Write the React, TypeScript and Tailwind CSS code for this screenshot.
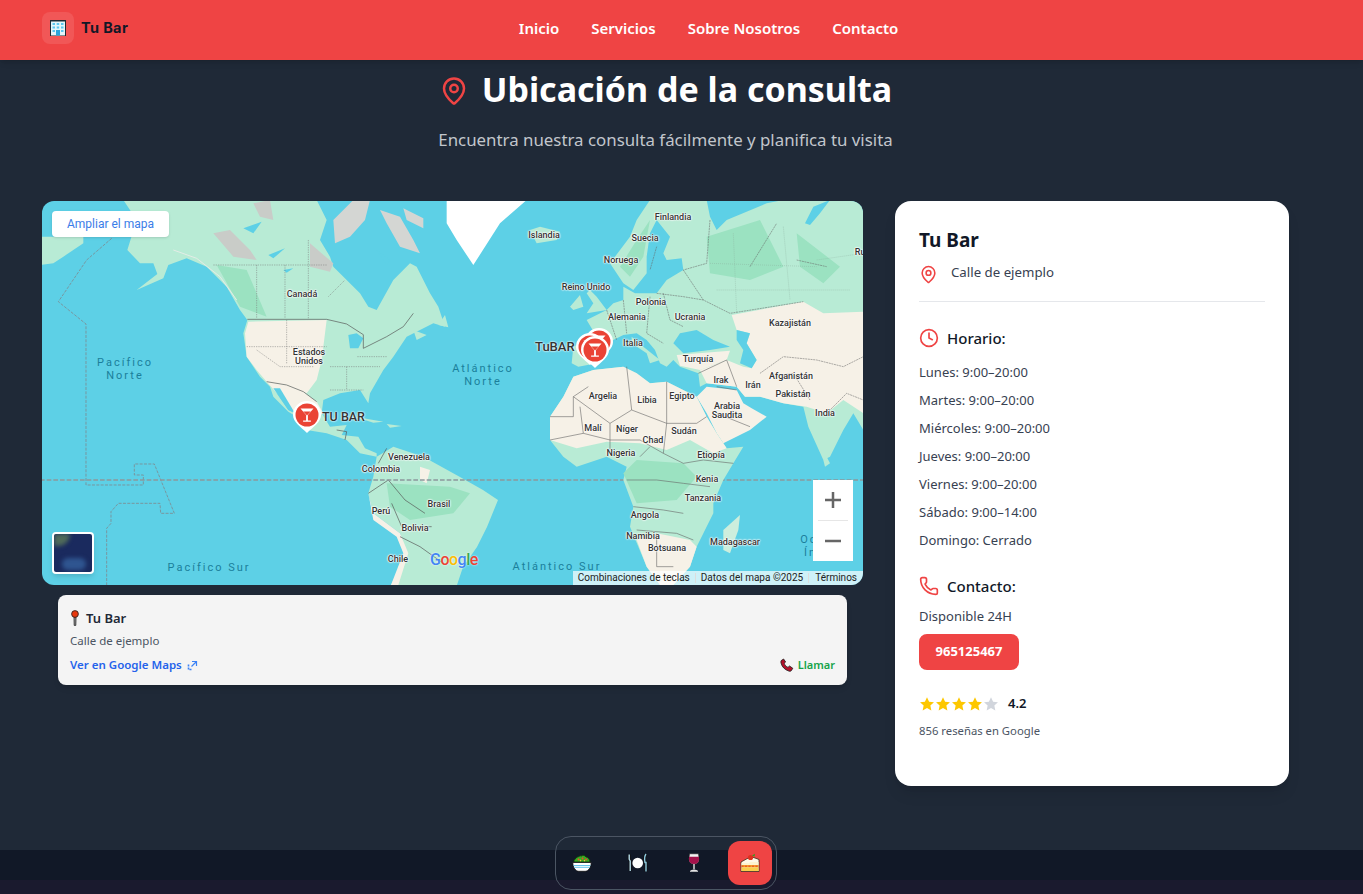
import { Clock, MapPin, Phone } from "lucide-react";

const waterLabels = [
  { t: "Pacífico", x: 125, y: 362 },
  { t: "Norte", x: 125, y: 375 },
  { t: "Atlántico", x: 483, y: 368 },
  { t: "Norte", x: 483, y: 381 },
  { t: "Pacífico Sur", x: 209, y: 567 },
  { t: "Atlántico Sur", x: 557, y: 566 },
  { t: "Océano", x: 825, y: 539 },
  { t: "Índico", x: 825, y: 552 },
];

const countryLabels = [
  { t: "Canadá", x: 302, y: 294 },
  { t: "Estados", x: 309, y: 352 },
  { t: "Unidos", x: 309, y: 361 },
  { t: "Venezuela", x: 409, y: 457 },
  { t: "Colombia", x: 381, y: 469 },
  { t: "Perú", x: 381, y: 511 },
  { t: "Brasil", x: 439, y: 504 },
  { t: "Bolivia", x: 415, y: 528 },
  { t: "Chile", x: 398, y: 559 },
  { t: "Finlandia", x: 673, y: 217 },
  { t: "Islandia", x: 544, y: 235 },
  { t: "Suecia", x: 645, y: 238 },
  { t: "Noruega", x: 621, y: 260 },
  { t: "Reino Unido", x: 586, y: 287 },
  { t: "Polonia", x: 651, y: 302 },
  { t: "Alemania", x: 627, y: 317 },
  { t: "Ucrania", x: 690, y: 317 },
  { t: "Kazajistán", x: 790, y: 323 },
  { t: "Italia", x: 633, y: 343 },
  { t: "Turquía", x: 698, y: 359 },
  { t: "Irak", x: 721, y: 380 },
  { t: "Irán", x: 753, y: 385 },
  { t: "Afganistán", x: 791, y: 376 },
  { t: "Pakistán", x: 793, y: 394 },
  { t: "Argelia", x: 603, y: 396 },
  { t: "Libia", x: 647, y: 400 },
  { t: "Egipto", x: 682, y: 396 },
  { t: "Arabia", x: 727, y: 406 },
  { t: "Saudita", x: 727, y: 415 },
  { t: "India", x: 825, y: 413 },
  { t: "Malí", x: 593, y: 428 },
  { t: "Níger", x: 627, y: 429 },
  { t: "Chad", x: 653, y: 440 },
  { t: "Sudán", x: 684, y: 431 },
  { t: "Nigeria", x: 621, y: 453 },
  { t: "Etiopía", x: 711, y: 455 },
  { t: "Kenia", x: 707, y: 479 },
  { t: "Tanzania", x: 703, y: 498 },
  { t: "Angola", x: 645, y: 515 },
  { t: "Namibia", x: 643, y: 536 },
  { t: "Botsuana", x: 667, y: 548 },
  { t: "Madagascar", x: 735, y: 542 },
  { t: "Rusia", x: 866, y: 252 },
];

const hours = [
  "Lunes: 9:00–20:00",
  "Martes: 9:00–20:00",
  "Miércoles: 9:00–20:00",
  "Jueves: 9:00–20:00",
  "Viernes: 9:00–20:00",
  "Sábado: 9:00–14:00",
  "Domingo: Cerrado",
];

const BuildingIcon = () => (
  <svg width="16" height="16" viewBox="0 0 16 16">
    <rect x="0" y="0" width="16" height="16" fill="#1c2a33" />
    <rect x="1" y="1.5" width="14" height="14" fill="#e3f5fa" />
    <path d="M2.5 3h2.5v2H2.500zM6.700 3h2.500v2H6.700zM11 3h2.500v2H11zM2.500 6.500h2.500v2H2.500zM6.700 6.500h2.500v2H6.700zM11 6.500h2.500v2H11zM2.500 10h2.500v2H2.500zM11 10h2.500v2H11z" fill="#5cc6ee" />
    <rect x="6" y="10" width="4" height="5.500" fill="#2aa5dd" />
  </svg>
);

const PinEmoji = () => (
  <svg width="10" height="16" viewBox="0 0 10 16" className="shrink-0">
    <path d="M4 7h2l-.2 8.400h-1.600z" fill="#9a9a9a" stroke="#222" strokeWidth="0.8" />
    <circle cx="5" cy="4" r="3.400" fill="#e8380d" stroke="#222" strokeWidth="0.8" />
  </svg>
);

const PhoneEmoji = () => (
  <svg width="14" height="14" viewBox="0 0 14 14" className="shrink-0">
    <path d="M1.200 2.600 3.600 1l2 3-1.400 1.400c.5 1.600 2 3.200 3.800 4L9.500 8l3.300 2.300-1.600 2.500c-.5.6-1.500.6-2.500.2C4.700 11.700 2 9 1 5c-.2-1-.2-1.800.2-2.400z" fill="#b3102a" stroke="#1a1a1a" strokeWidth="0.8" />
  </svg>
);

const OutLink = () => (
  <svg width="11" height="11" viewBox="0 0 11 11" fill="none" stroke="#3b82f6" strokeWidth="1.200">
    <path d="M5 1.500h4.500v4.500M9.500 1.500 4.500 6.500" />
    <path d="M1.500 4.500v5h4" strokeWidth="1.600" strokeDasharray="2 1" />
  </svg>
);

const Star = ({ on }: { on: boolean }) => (
  <svg width="16" height="16" viewBox="0 0 20 20" className={on ? "fill-yellow-400" : "fill-gray-300"}>
    <path d="M10 1.500l2.600 5.600 6.100.7-4.500 4.200 1.200 6-5.400-3-5.400 3 1.200-6L1.300 7.800l6.100-.7z" />
  </svg>
);

const Salad = () => (
  <svg width="20" height="18" viewBox="0 0 20 18">
    <path d="M2 8C1.500 5 4 5 5 3c1.500.5 2.500-2 4.500-1 1.500-1.500 3.500-.5 4.500 1 2 0 4 2.500 4 5z" fill="#38a824" stroke="#0f3b0c" strokeWidth="0.9" />
    <path d="M6 6l1.300-1M10 5l1.200-1M13.500 6l1.200-1" stroke="#ef4a2a" strokeWidth="1.700" />
    <path d="M8 7l1-1M12 7l1-.8" stroke="#f6c445" strokeWidth="1.200" />
    <path d="M.8 8.500h18.400c0 5-3 8.800-6 8.800H6.800c-3 0-6-3.800-6-8.800z" fill="#fff" stroke="#111" strokeWidth="0.8" />
    <path d="M1.500 11.500h17M2.300 13.300h15.400" stroke="#55bdea" strokeWidth="0.9" />
  </svg>
);

const Plate = () => (
  <svg width="22" height="20" viewBox="0 0 22 20">
    <path d="M2.200 1.500v4.500c0 1 1 1.500 1 2v10" stroke="#111" strokeWidth="2.800" fill="none" />
    <path d="M2.200 1.500v4.500c0 1 1 1.500 1 2v10" stroke="#b5dcec" strokeWidth="1.400" fill="none" />
    <path d="M19 1c-1.500 2-1.500 6-1 8.500h1V18.500" stroke="#111" strokeWidth="2.800" fill="none" />
    <path d="M19 1c-1.500 2-1.500 6-1 8.500h1V18.500" stroke="#8fcbe2" strokeWidth="1.400" fill="none" />
    <circle cx="10.700" cy="10" r="5.300" fill="#fff" />
  </svg>
);

const Wine = () => (
  <svg width="12" height="20" viewBox="0 0 12 20">
    <path d="M1.500.8h9l.6 5.200c0 3.300-2 5-5.100 5S.9 9.300.9 6z" fill="#f1f1f1" stroke="#111" strokeWidth="0.5" />
    <path d="M1.100 3.800h9.800l.2 2.200c0 3.300-2 5-5.100 5S.9 9.300.9 6z" fill="#a3124b" />
    <path d="M5.300 11h1.400v5.500H5.300z" fill="#e5e5e5" />
    <path d="M2 18c1-1.800 7-1.800 8 0v.8H2z" fill="#e5e5e5" />
  </svg>
);

const Cake = () => (
  <svg width="20" height="20" viewBox="0 0 20 20">
    <path d="M1 9 11 3.500l8 3V18.500H1z" fill="#fff8e6" stroke="#3b2a16" strokeWidth="0.8" />
    <path d="M1.500 10h8v-1h9v3H1.500z" fill="#fdf3cf" />
    <path d="M1.500 12h17v2.500h-17z" fill="#f59e2b" />
    <path d="M1.500 13.200h17" stroke="#e8402a" strokeWidth="1" strokeDasharray="2 1.500" />
    <path d="M1.500 14.500h17V18h-17z" fill="#f9cf4c" />
    <circle cx="10.500" cy="4.500" r="2.600" fill="#e0301e" />
    <path d="M12 2.500 15 .8l-.5 2.700z" fill="#2f9e1f" />
  </svg>
);

const CocktailPin = ({ r, className }: { r: number; className: string }) => (
  <svg width={r * 2 + 6} height={r * 2 + 12} viewBox="-15 -15 30 36" className={className}>
    <path d="M-14 0a14 14 0 1 1 28 0c0 7-8 12-14 18C-6 12-14 7-14 0z" fill="#fff" />
    <circle r="11.500" fill="#ea4335" />
    <path d="M-6.500-6.500h13L.9 0v5.500h3v1.300h-7.800V5.500h3V0z" fill="#fff" />
    <path d="M-3.700-3.500h7.400L0 .4z" fill="#ea4335" />
  </svg>
);

const LAND = "#b8ebd5";
const DARK = "#9be2c1";
const SAND = "#f6f1e7";
const SEA = "#5dd0e6";

const WorldMap = () => (
  <svg viewBox="42 201 821 384" className="absolute inset-0 h-full w-full">
    <rect x="42" y="201" width="821" height="384" fill={SEA} />
    {/* americas, traced from a 3x crop */}
    <g transform="translate(40 200) scale(0.33333)">
      <path d="M0 110L130 110 130 130 70 170 40 190 0 195Z" fill={LAND} />
      <path d="M250 0L290 60 262 150 300 190 340 190 352 222 290 270 370 235 385 195 440 175 500 200 560 260 600 330 622 360 610 400 620 470 660 530 690 560 700 590 745 635 770 650 800 690 860 700 920 720 960 760 1010 770 1010 760 975 745 955 710 905 705 920 675 870 680 845 640 850 600 900 580 960 570 985 610 990 580 1030 510 1060 470 1100 410 1180 370 1215 380 1195 320 1170 280 1130 200 1110 190 1060 240 1010 330 985 320 960 280 880 200 870 170 840 120 860 60 830 0Z" fill={LAND} />
      <path d="M700 565L720 565 765 640 745 630Z" fill={SEA} />
      <path d="M1010 770L1060 740 1150 770 1260 831 1329 870 1374 900 1341 981 1311 1041 1269 1101 1251 1155 1053 1155 1100 1060 1080 1000 1000 940 985 880 1000 830Z" fill={LAND} />
      <path d="M1040 850L1230 860 1290 880 1240 940 1110 960 1050 920Z" fill={DARK} />
      <path d="M625 365L860 360 845 480 830 540 800 580 740 555 680 545 650 510 620 470 615 400Z" fill={SAND} />
      <path d="M680 545L740 555 790 575 830 605 850 640 800 670 770 650 720 590Z" fill={SAND} />
      <path d="M700 565L720 565 765 640 745 630Z" fill={SEA} />
      <path d="M985 880L1000 940 1080 1000 1105 1060 1075 1155 1053 1155 1090 1060 1070 1010 1000 960Z" fill={SAND} />
      <path d="M530 195L600 320 680 350 620 210Z" fill={DARK} />
      <path d="M1140 800L1170 810 1160 850 1140 840Z" fill={SAND} />
      <path d="M400 150L470 175 540 230 590 300" fill="none" stroke="#e4ece6" strokeWidth="3" />
      <path d="M520 100L570 90 630 150 650 180 580 170Z M810 130L880 190 870 215 810 200Z M640 10L690 0 700 60 660 50Z" fill="#c9ccc8" />
      <path d="M880 60L940 0 990 0 975 60 930 110 885 130Z M1020 30L1080 50 1120 120 1140 160 1080 140 1040 70Z M1090 25L1150 55 1150 85 1100 60Z" fill="#d4d6d3" />
      <path d="M610 85L665 65 640 100Z M685 165L735 145 700 175Z M730 210L760 205 740 218Z M925 405L950 400 970 415 955 445 930 445Z M1010 150L1050 180 1040 195Z" fill={SEA} />
      <path d="M945 650L1030 665 1000 668Z M1040 672L1085 678 1050 683Z M1215 345L1225 382 1195 375Z M1120 390L1160 405 1130 420Z" fill={LAND} />
      <path d="M622 358L860 358 920 372 970 404 970 445 1040 410 1090 380 1120 340M680 545L740 555 790 575 830 605M890 690L920 695 915 720M1040 745L1015 790M985 880L1045 840 1095 900 1155 940M1055 910L1085 980 1175 980M1080 1010L1140 1040 1210 1090" fill="none" stroke="#555" strokeWidth="2" />
      <path d="M520 195H860M650 195V355M735 195V355M805 120V355M865 290L915 240M620 440H860M650 450L720 500H820M740 360V490M870 500H1020M870 570H970M1040 470H950M920 500V570" fill="none" stroke="#777" strokeWidth="1.500" strokeDasharray="4 3" />
      <path d="M215 115L140 180 55 305 138 372V855H310V825H283V792H343L403 940H362L360 910H235L213 935V970L200 985V1155" fill="none" stroke="#7d8b92" strokeWidth="2.500" strokeDasharray="9 4" />
      <path d="M0 840H2500" fill="none" stroke="#8c989c" strokeWidth="4" strokeDasharray="14 6" />
    </g>
    {/* europe, africa, asia */}
    <g transform="translate(450 200) scale(0.33333)">
      <path d="M-10 0L230 0 150 70 70 195 20 120-10 70Z" fill="#fff" />
      <path d="M240 90L270 80 330 95 320 120 260 130Z" fill={LAND} />
      <path d="M600 0L770 0 780 50 800 90 830 60 950 10 1000 0 1240 0 1240 690 1210 640 1180 690 1140 770 1120 780 1075 680 1060 620 1000 610 930 590 885 590 860 560 770 550 750 560 745 520 690 500 670 480 650 500 630 490 615 450 590 420 560 400 520 405 490 420 440 490 385 500 365 490 370 440 410 420 440 410 410 360 470 330 490 310 520 300 520 260 555 280 620 280 650 240 700 210 695 175 650 180 640 160 660 110 620 60 600 100 590 170 590 220 550 270 520 250 480 190 540 110 560 60Z" fill={LAND} />
      <path d="M545 410L580 440 630 480 600 490 590 460 545 430Z" fill={LAND} />
      <path d="M420 270L440 290 470 330 410 340 430 310 410 280Z M360 320L390 285 400 320 370 330Z" fill={LAND} />
      <path d="M770 110L930 60 1000 200 900 240 780 220Z M560 120L600 60 580 170 540 230 510 200Z M1040 100L1170 200 1120 250 1050 200Z" fill={DARK} />
      <path d="M845 345L1060 305 1120 340 1240 335 1240 640 1180 600 1130 640 1070 620 1000 610 930 590 885 590 860 560 770 550 750 510 830 480 880 500 905 505 920 480 890 430 900 400 860 390Z" fill={SAND} />
      <path d="M680 465L840 452 830 480 750 510 690 497Z" fill={SAND} />
      <path d="M740 590L770 560 860 570 880 610 905 625 950 650 900 690 820 730 800 700 770 640Z" fill={SAND} />
      <path d="M690 400L740 390 790 420 840 440 780 450 700 460 670 430Z M860 390L900 400 890 430 920 480 905 505 870 490 880 450 860 420Z M1065 70L1090 20 1140 0 1110 40 1080 75Z" fill={SEA} />
      <path d="M1130 770L1140 790 1125 800 1120 780Z" fill={LAND} />
      <path d="M300 650L340 590 370 530 430 510 520 500 560 520 600 550 650 545 740 590 770 650 800 700 830 745 880 740 850 790 820 840 790 910 790 940 740 1040 720 1100 670 1155 630 1155 590 1100 540 980 550 920 520 840 530 800 470 770 380 800 340 770 300 720Z" fill={LAND} />
      <path d="M300 650L340 590 370 530 430 510 520 500 560 520 600 550 650 545 740 590 770 650 800 700 830 745 790 760 720 720 650 750 570 730 470 725 380 745 300 720Z" fill={SAND} />
      <path d="M590 1100L560 1020 620 1000 720 1020 740 1040 720 1100 670 1155 630 1155Z" fill={SAND} />
      <path d="M520 820L560 780 700 790 740 830 680 900 560 910Z" fill={DARK} />
      <path d="M870 945L865 990 840 1060 820 1050 820 990Z" fill="#cdeedd" />
      <path d="M370 590L480 670 545 630 650 670M300 650H370V590L415 560M390 620L400 700M480 670V750M545 630L530 500M650 545V670L640 760M650 670H740L770 650M640 760L700 790 760 780 850 790M300 720L400 700 480 720 570 720 640 760M570 770L600 740M530 840L620 840 700 850 780 860M550 920L640 930 700 940M560 990L680 1000 730 1020M620 1000V1100H670M745 520L830 480 860 560M800 560L860 570M800 640L900 680" fill="none" stroke="#666" strokeWidth="1.800" />
      <path d="M470 330L500 420M520 300L530 400M600 290L590 400 640 430M640 280L660 360 700 380M700 210L760 300 840 340 1060 305M620 280L700 290 760 300M620 140L600 210M780 60L770 190 700 210M900 200L980 70M1040 180L1130 200M960 530L1030 520 1080 600M930 520L1000 470 1100 480 1180 500 1240 470M1130 640L1190 580 1240 600" fill="none" stroke="#666" strokeWidth="1.600" strokeDasharray="6 2" />
      <path d="M780 190L1100 200M850 100L860 340M1000 80L1020 300M1100 180L1240 160M800 270L1200 270" fill="none" stroke="#8a9" strokeWidth="1.200" strokeDasharray="3 3" />
    </g>
  </svg>
);

export default function App() {
  return (
    <div className="relative h-[894px] overflow-hidden bg-[#1f2937] font-['Noto_Sans',sans-serif]">
      <header className="relative z-10 flex h-[60px] items-center justify-between bg-[#ef4444] px-[42px] pb-1 shadow-md">
        <div className="flex items-center gap-[7px]">
          <div className="flex h-8 w-8 items-center justify-center rounded-lg bg-white/10">
            <BuildingIcon />
          </div>
          <span className="font-['Inter',sans-serif] text-[14.5px] font-bold tracking-wide text-[#111827]">Tu Bar</span>
        </div>
        <nav className="flex items-center gap-8 text-[15px] font-semibold text-white">
          <a>Inicio</a>
          <a>Servicios</a>
          <a>Sobre Nosotros</a>
          <a>Contacto</a>
        </nav>
        <div className="w-[32px]" />
      </header>

      <main className="h-[790px] w-[1289px] pl-[42px]">
        <div className="flex h-[56px] items-center justify-center gap-[13px] pt-[2px]">
          <MapPin size={30} strokeWidth={2} className="mt-1 text-[#ef4444]" />
          <h1 className="text-[34px] leading-none font-bold text-white">Ubicación de la consulta</h1>
        </div>
        <p className="mt-[12px] text-center text-[16.85px] leading-6 text-[#c2c6cc]">
          Encuentra nuestra consulta fácilmente y planifica tu visita
        </p>

        <div className="mt-[49px] grid grid-cols-[821px_394px] gap-8">
          <div>
            <div className="relative h-[384px] overflow-hidden rounded-xl font-['Roboto',sans-serif]">
              <WorldMap />
              {waterLabels.map((l) => (
                <span
                  key={l.t + l.x + l.y}
                  className="absolute -translate-x-1/2 -translate-y-1/2 text-[11px] leading-none tracking-[2px] whitespace-nowrap text-[#1b7f9b]"
                  style={{ left: l.x - 42, top: l.y - 201 }}
                >
                  {l.t}
                </span>
              ))}
              {countryLabels.map((l) => (
                <span
                  key={l.t + l.x}
                  className="absolute -translate-x-1/2 -translate-y-1/2 text-[9px] leading-none font-medium whitespace-nowrap text-[#333] [text-shadow:0_0_2px_#fff,0_0_2px_#fff,0_0_2px_#fff,0_0_1px_#fff]"
                  style={{ left: l.x - 42, top: l.y - 201 }}
                >
                  {l.t}
                </span>
              ))}

              <CocktailPin r={12} className="absolute top-[199px] left-[250px]" />
              <span className="absolute top-[207px] left-[280px] text-[12.5px] font-medium text-[#333] [text-shadow:0_0_2px_#fff,0_0_2px_#fff]">TU BAR</span>
              <CocktailPin r={12} className="absolute top-[126px] left-[542px]" />
              <CocktailPin r={12} className="absolute top-[131px] left-[533px]" />
              <CocktailPin r={12} className="absolute top-[134px] left-[538px]" />
              <span className="absolute top-[136px] left-[493px] text-[13px] font-medium text-[#333] [text-shadow:0_0_2px_#fff,0_0_2px_#fff]">TuBAR</span>

              <a className="absolute top-[10px] left-[10px] flex h-[26px] w-[117px] items-center justify-center rounded-sm bg-white text-xs text-[#3b7de8] shadow-sm">
                Ampliar el mapa
              </a>

              <div className="absolute bottom-[11px] left-[10px] h-[42px] w-[42px] overflow-hidden rounded-sm border-2 border-white bg-[#1a2a5e] shadow-md">
                <div className="h-3 w-4 rounded-br-xl bg-[#4f6a5a] blur-[2px]" />
                <div className="mt-3 ml-2 h-3 w-6 rounded-full bg-[#2f5590] blur-[2px]" />
              </div>

              <div className="absolute right-[10px] bottom-[24px] flex h-[81px] w-10 flex-col items-center bg-white text-[#666]">
                <svg width="40" height="40" viewBox="0 0 40 40" className="shrink-0">
                  <path d="M20 12v16M12 20h16" stroke="#666" strokeWidth="2.500" />
                </svg>
                <div className="h-px w-[30px] bg-[#e6e6e6]" />
                <svg width="40" height="40" viewBox="0 0 40 40" className="shrink-0">
                  <path d="M12 20h16" stroke="#666" strokeWidth="2.500" />
                </svg>
              </div>

              <span className="absolute bottom-[17px] left-[388px] text-[16px] leading-none font-medium tracking-[-0.5px] [text-shadow:0_0_2px_#fff]">
                <span className="text-[#4285f4]">G</span>
                <span className="text-[#ea4335]">o</span>
                <span className="text-[#fbbc05]">o</span>
                <span className="text-[#4285f4]">g</span>
                <span className="text-[#34a853]">l</span>
                <span className="text-[#ea4335]">e</span>
              </span>

              <div className="absolute right-0 bottom-0 flex h-[14px] items-center bg-white/70 text-[10px] leading-none text-[#222]">
                <span className="border-r border-[#ddd] px-[5px]">Combinaciones de teclas</span>
                <span className="border-r border-[#ddd] px-[5px]">Datos del mapa ©2025</span>
                <span className="px-[6px]">Términos</span>
              </div>
            </div>

            <div className="mx-4 mt-[10px] h-[90px] rounded-lg bg-[#f4f4f4] px-3 pt-[13px] shadow-md">
              <div className="flex items-center gap-[6px] text-[13px] leading-5 font-semibold text-[#1f2937]">
                <PinEmoji />
                <span>Tu Bar</span>
              </div>
              <p className="mt-[3px] text-[11.5px] leading-5 text-[#4b5563]">Calle de ejemplo</p>
              <div className="mt-1 flex items-center justify-between text-[11.5px] leading-5 font-semibold">
                <a className="flex items-center gap-[5px] text-[#2563eb]">
                  Ver en Google Maps <OutLink />
                </a>
                <a className="flex items-center gap-1 text-[11px] text-[#16a34a]">
                  <PhoneEmoji /> Llamar
                </a>
              </div>
            </div>
          </div>

          <aside className="h-[585px] rounded-2xl bg-white px-6 pt-[27px] shadow-lg">
            <h3 className="text-[19px] leading-6 font-bold text-[#111827]">Tu Bar</h3>
            <div className="mt-[10px] flex items-start gap-[13px] border-b border-[#e5e7eb] pb-[17px] text-[#374151]">
              <MapPin size={19} className="mt-[3px] shrink-0 text-[#ef4444]" />
              <span className="text-[13.25px] leading-5">Calle de ejemplo</span>
            </div>

            <div className="mt-[26px] flex h-5 items-center gap-2 text-[15px] font-medium text-[#111827]">
              <Clock size={20} className="text-[#ef4444]" />
              Horario:
            </div>
            <ul className="mt-[10px] text-[13px] leading-7 text-[#374151]">
              {hours.map((h) => (
                <li key={h}>{h}</li>
              ))}
            </ul>

            <div className="mt-[22px] flex h-5 items-center gap-2 text-[15px] font-medium text-[#111827]">
              <Phone size={20} className="text-[#ef4444]" />
              Contacto:
            </div>
            <p className="mt-[10px] text-[13px] leading-5 text-[#374151]">Disponible 24H</p>
            <a className="mt-2 flex h-9 w-[100px] items-center justify-center rounded-lg bg-[#ef4444] text-[13px] font-bold text-white">
              965125467
            </a>
            <div className="mt-[24px] flex h-5 items-center">
              {[1, 2, 3, 4, 5].map((n) => (
                <Star key={n} on={n <= 4} />
              ))}
              <span className="ml-[9px] text-[13px] font-semibold text-[#111827]">4.2</span>
            </div>
            <p className="mt-[9px] text-[11.3px] leading-4 text-[#4b5563]">856 reseñas en Google</p>
          </aside>
        </div>
      </main>

      <footer className="h-[44px] bg-[#111827]">
        <div className="h-[30px]" />
        <div className="h-[14px] bg-[#1a1a2e]" />
      </footer>

      <div className="absolute bottom-[4px] left-[555px] flex h-[54px] w-[222px] items-center gap-3 rounded-2xl border border-[#4b5563] pl-[4px]">
        <div className="flex h-11 w-11 items-center justify-center"><Salad /></div>
        <div className="flex h-11 w-11 items-center justify-center"><Plate /></div>
        <div className="flex h-11 w-11 items-center justify-center"><Wine /></div>
        <div className="flex h-11 w-11 items-center justify-center rounded-xl bg-[#ef4444]"><Cake /></div>
      </div>
    </div>
  );
}
